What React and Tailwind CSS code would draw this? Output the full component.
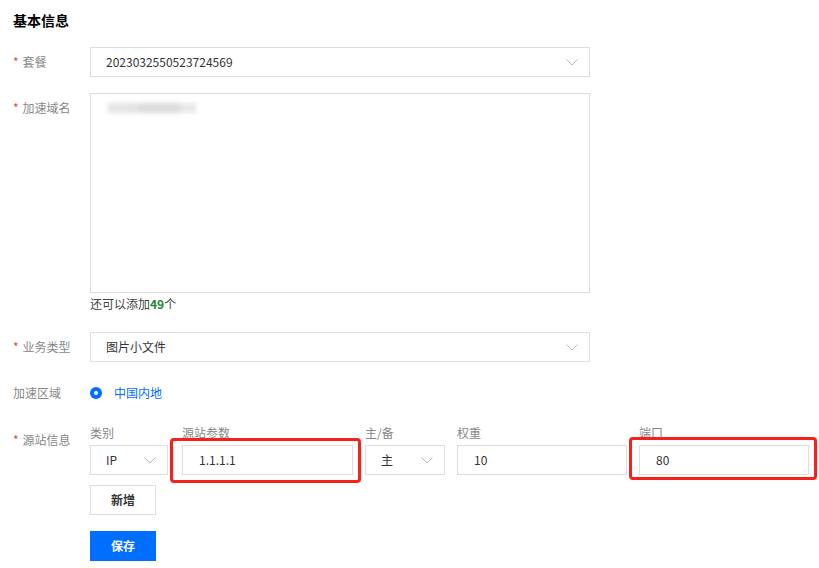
import React from "react";

const font = { fontFamily: '"Noto Sans CJK SC", "Liberation Sans", sans-serif' };

const Chevron = () => (
  <svg width="12" height="7" viewBox="0 0 12 7" fill="none" className="shrink-0">
    <path d="M0.5 0.5 L6 6 L11.5 0.5" stroke="#b8b8b8" strokeWidth="1" />
  </svg>
);

const Label = ({ required, children, className = "" }) => (
  <div className={`w-[77px] shrink-0 text-[12px] text-[#888] leading-[30px] ${className}`}>
    {required && <span className="text-[#e54545] mr-[4px]">*</span>}
    {children}
  </div>
);

const Select = ({ value, width }) => (
  <div className={`${width} h-[30px] border border-[#dddddd] bg-white flex items-center justify-between pl-[15px] pr-[11px] text-[12px] text-[#333]`}>
    <span>{value}</span>
    <Chevron />
  </div>
);

const Input = ({ value, width }) => (
  <div className={`${width} h-[30px] border border-[#dddddd] bg-white flex items-center pl-[16px] text-[12px] text-[#333]`}>
    {value}
  </div>
);

const Col = ({ label, children, className = "" }) => (
  <div className={`flex flex-col ${className}`}>
    <div className="text-[12px] text-[#888] leading-[14px] h-[20px] pt-[1px]">{label}</div>
    {children}
  </div>
);

export default function App() {
  return (
    <div className="w-[819px] h-[568px] bg-white overflow-hidden relative" style={font}>
      <div className="pl-[13px] pt-[12px]">
        <h2 className="text-[14px] font-bold text-[#000] leading-[16px]">基本信息</h2>

        <div className="flex mt-[19px]">
          <Label required>套餐</Label>
          <Select value="2023032550523724569" width="w-[500px]" />
        </div>

        <div className="flex mt-[16px]">
          <Label required>加速域名</Label>
          <div className="flex flex-col">
            <div className="w-[500px] h-[200px] border border-[#dddddd] bg-white pt-[9px] pl-[17px]">
              <div className="w-[88px] h-[10px] flex blur-[2px]">
                <div className="w-[30px] h-full bg-[#e4e4e4]" />
                <div className="w-[42px] h-full bg-[#dcdcdc]" />
                <div className="w-[16px] h-full bg-[#e8e8e8]" />
              </div>
            </div>
            <div className="text-[12px] text-[#444] leading-[16px] mt-[3px]">
              还可以添加<span className="text-[#1a8a2a] font-bold">49</span>个
            </div>
          </div>
        </div>

        <div className="flex mt-[20px]">
          <Label required>业务类型</Label>
          <Select value="图片小文件" width="w-[500px]" />
        </div>

        <div className="flex items-center mt-[16px] h-[30px]">
          <Label>加速区域</Label>
          <div className="flex items-center">
            <span className="w-[12px] h-[12px] rounded-full bg-[#006eff] flex items-center justify-center">
              <span className="w-[4px] h-[4px] rounded-full bg-white" />
            </span>
            <span className="ml-[12px] text-[12px] text-[#006eff]">中国内地</span>
          </div>
        </div>

        <div className="flex mt-[17px]">
          <Label required className="leading-[26px]">源站信息</Label>
          <div className="flex flex-col">
            <div className="flex">
              <Col label="类别" className="mr-[14px]">
                <Select value="IP" width="w-[78px]" />
              </Col>
              <Col label="源站参数" className="mr-[12px]">
                <Input value="1.1.1.1" width="w-[171px]" />
              </Col>
              <Col label="主/备" className="mr-[12px]">
                <Select value="主" width="w-[80px]" />
              </Col>
              <Col label="权重" className="mr-[12px]">
                <Input value="10" width="w-[170px]" />
              </Col>
              <Col label="端口">
                <Input value="80" width="w-[170px]" />
              </Col>
            </div>
            <button className="mt-[10px] w-[66px] h-[30px] border border-[#dddddd] bg-white text-[12px] font-bold text-[#333]">
              新增
            </button>
            <button className="mt-[16px] w-[66px] h-[30px] bg-[#006eff] text-[12px] font-bold text-white">
              保存
            </button>
          </div>
        </div>
      </div>

      {/* annotation boxes */}
      <div className="absolute left-[170px] top-[438px] w-[191px] h-[45px] border-[3px] border-[#f5221b] rounded-[4px]" />
      <div className="absolute left-[629px] top-[437px] w-[188px] h-[43px] border-[3px] border-[#f5221b] rounded-[4px]" />
    </div>
  );
}
